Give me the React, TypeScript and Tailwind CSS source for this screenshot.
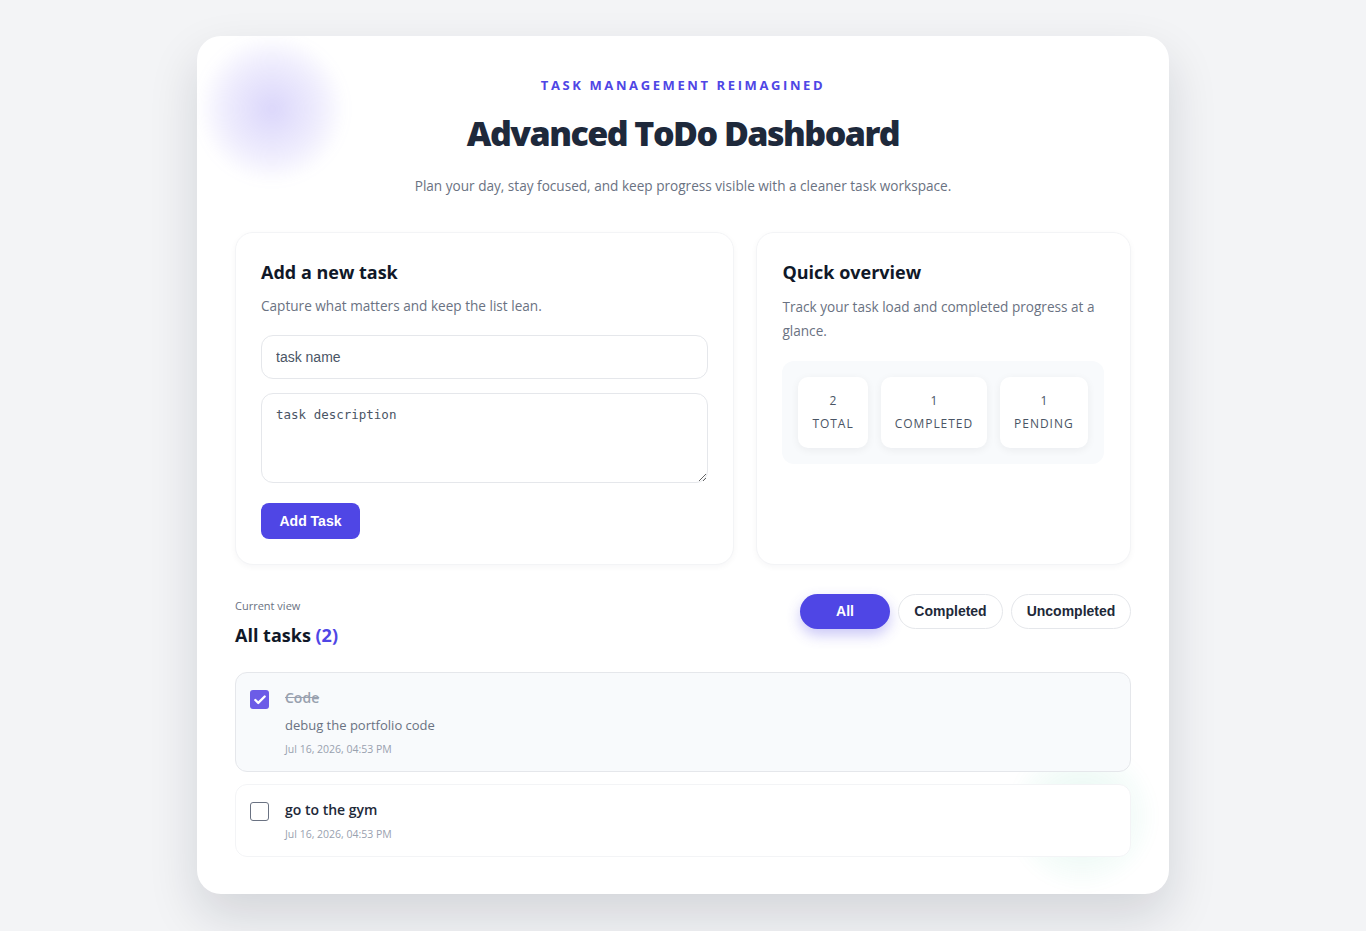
import { Check } from "lucide-react";

type Task = {
  id: number;
  title: string;
  description?: string;
  createdAt: string;
  done: boolean;
};

const tasks: Task[] = [
  {
    id: 1,
    title: "Code",
    description: "debug the portfolio code",
    createdAt: "Jul 16, 2026, 04:53 PM",
    done: true,
  },
  { id: 2, title: "go to the gym", createdAt: "Jul 16, 2026, 04:53 PM", done: false },
];

const sans = "font-['Open_Sans','Noto_Sans',sans-serif]";
const arial = "font-['Liberation_Sans',Arial,sans-serif]";

function StatTile({ value, label }: { value: number; label: string }) {
  return (
    <div className="flex flex-col items-center rounded-[10px] bg-white px-[14px] pt-[15px] pb-[15px] shadow-[0_2px_8px_rgba(15,23,42,0.06)]">
      <span className="text-[12px] leading-[18px] text-gray-600">{value}</span>
      <span className="mt-[5px] text-[12px] leading-[18px] tracking-[0.08em] text-gray-600">{label}</span>
    </div>
  );
}

function TaskRow({ task }: { task: Task }) {
  return (
    <div
      className={`flex gap-[16px] rounded-[12px] border px-[14px] py-[13px] ${
        task.done ? "border-gray-200 bg-[#f8fafc]" : "border-gray-100 bg-white"
      }`}
    >
      <div className="pt-[4px]">
        {task.done ? (
          <span className="flex h-[19px] w-[19px] items-center justify-center rounded-[3px] bg-[#6c5ce7]">
            <Check className="h-[14px] w-[14px] text-white" strokeWidth={4} />
          </span>
        ) : (
          <span className="block h-[19px] w-[19px] rounded-[3px] border-[1.5px] border-gray-500 bg-white" />
        )}
      </div>
      <div className="flex flex-col">
        <span
          className={`text-[14px] leading-[24px] ${
            task.done ? "font-semibold text-gray-400 line-through" : "font-semibold text-gray-800"
          }`}
        >
          {task.title}
        </span>
        {task.description ? (
          <span className="mt-[3px] text-[13px] leading-[24px] text-gray-500">{task.description}</span>
        ) : null}
        <span className="mt-[3px] text-[10.5px] leading-[18px] text-gray-400">{task.createdAt}</span>
      </div>
    </div>
  );
}

export default function App() {
  return (
    <div className={`min-h-[931px] bg-[#f3f4f6] pt-[36px] pb-[38px] ${sans}`}>
      <div className="relative mx-auto w-[972px] overflow-hidden rounded-[24px] bg-white px-[38px] pt-[41px] pb-[37px] shadow-[0_22px_50px_rgba(15,23,42,0.14)]">
        {/* soft decorative glows */}
        <div className="pointer-events-none absolute left-[0px] top-[-2px] h-[150px] w-[150px] rounded-full bg-[radial-gradient(circle,rgba(124,108,240,0.28)_0%,rgba(124,108,240,0.12)_45%,rgba(124,108,240,0)_70%)] blur-[6px]" />
        <div className="pointer-events-none absolute left-[810px] top-[705px] h-[150px] w-[150px] rounded-full bg-[radial-gradient(circle,rgba(16,185,129,0.10)_0%,rgba(16,185,129,0.05)_45%,rgba(16,185,129,0)_70%)] blur-[6px]" />

        <header className="relative flex flex-col items-center text-center">
          <span className="text-[13px] font-bold leading-[16px] tracking-[0.2em] text-[#4f46e5]">
            TASK MANAGEMENT REIMAGINED
          </span>
          <h1 className="mt-[18px] text-[34px] font-extrabold leading-[44px] tracking-[-0.045em] text-[#1e293b]">
            Advanced ToDo Dashboard
          </h1>
          <p className="mt-[21px] text-[13.6px] leading-[20px] text-gray-500">
            Plan your day, stay focused, and keep progress visible with a cleaner task workspace.
          </p>
        </header>

        <div className="relative mt-[36px] grid grid-cols-[4fr_3fr] gap-[22px]">
          <section className="flex flex-col rounded-[18px] border border-gray-100 bg-white px-[25px] pt-[26px] pb-[25px] shadow-[0_2px_6px_rgba(15,23,42,0.04)]">
            <h2 className="text-[18px] font-bold leading-[26px] text-gray-900">Add a new task</h2>
            <p className="mt-[10px] text-[13.6px] leading-[22px] text-gray-500">
              Capture what matters and keep the list lean.
            </p>
            <input
              placeholder="task name"
              className={`mt-[18px] h-[44px] rounded-[12px] border border-gray-200 bg-white px-[14px] text-[14px] text-gray-700 outline-none placeholder:text-gray-600 ${arial}`}
            />
            <textarea
              placeholder="task description"
              className="mt-[14px] h-[90px] resize-y rounded-[12px] border border-gray-200 bg-white px-[14px] py-[12px] font-['DejaVu_Sans_Mono','Liberation_Mono',monospace] text-[12.5px] text-gray-700 outline-none placeholder:text-gray-600"
            />
            <button
              className={`mt-[20px] h-[36px] w-[99px] rounded-[8px] bg-[#4f46e5] text-[14px] font-bold text-white ${arial}`}
            >
              Add Task
            </button>
          </section>

          <section className="flex flex-col rounded-[18px] border border-gray-100 bg-white px-[25px] pt-[26px] pb-[25px] shadow-[0_2px_6px_rgba(15,23,42,0.04)]">
            <h2 className="text-[18px] font-bold leading-[26px] text-gray-900">Quick overview</h2>
            <p className="mt-[10px] text-[13.6px] leading-[24px] text-gray-500">
              Track your task load and completed progress at a glance.
            </p>
            <div className="mt-[18px] flex gap-[13px] self-start rounded-[12px] bg-[#f8fafc] px-[16px] py-[16px] pr-[16px]">
              <StatTile value={2} label="TOTAL" />
              <StatTile value={1} label="COMPLETED" />
              <StatTile value={1} label="PENDING" />
            </div>
          </section>
        </div>

        <div className="relative mt-[33px] flex items-start justify-between">
          <div className="flex flex-col">
            <span className="text-[11px] leading-[16px] text-gray-500">Current view</span>
            <h3 className="mt-[9px] text-[18px] font-bold leading-[24px] text-gray-900">
              All tasks <span className="text-[#4f46e5]">(2)</span>
            </h3>
          </div>
          <div className={`mt-[-4px] flex gap-[8px] ${arial}`}>
            <button className="h-[35px] w-[90px] rounded-full bg-[#4f46e5] text-[14px] font-bold text-white shadow-[0_6px_14px_rgba(79,70,229,0.3)]">
              All
            </button>
            <button className="h-[35px] w-[105px] rounded-full border border-gray-200 bg-white text-[14px] font-bold text-gray-800">
              Completed
            </button>
            <button className="h-[35px] w-[120px] rounded-full border border-gray-200 bg-white text-[14px] font-bold text-gray-800">
              Uncompleted
            </button>
          </div>
        </div>

        <div className="relative mt-[25px] flex flex-col gap-[12px]">
          {tasks.map((t) => (
            <TaskRow key={t.id} task={t} />
          ))}
        </div>
      </div>
    </div>
  );
}
